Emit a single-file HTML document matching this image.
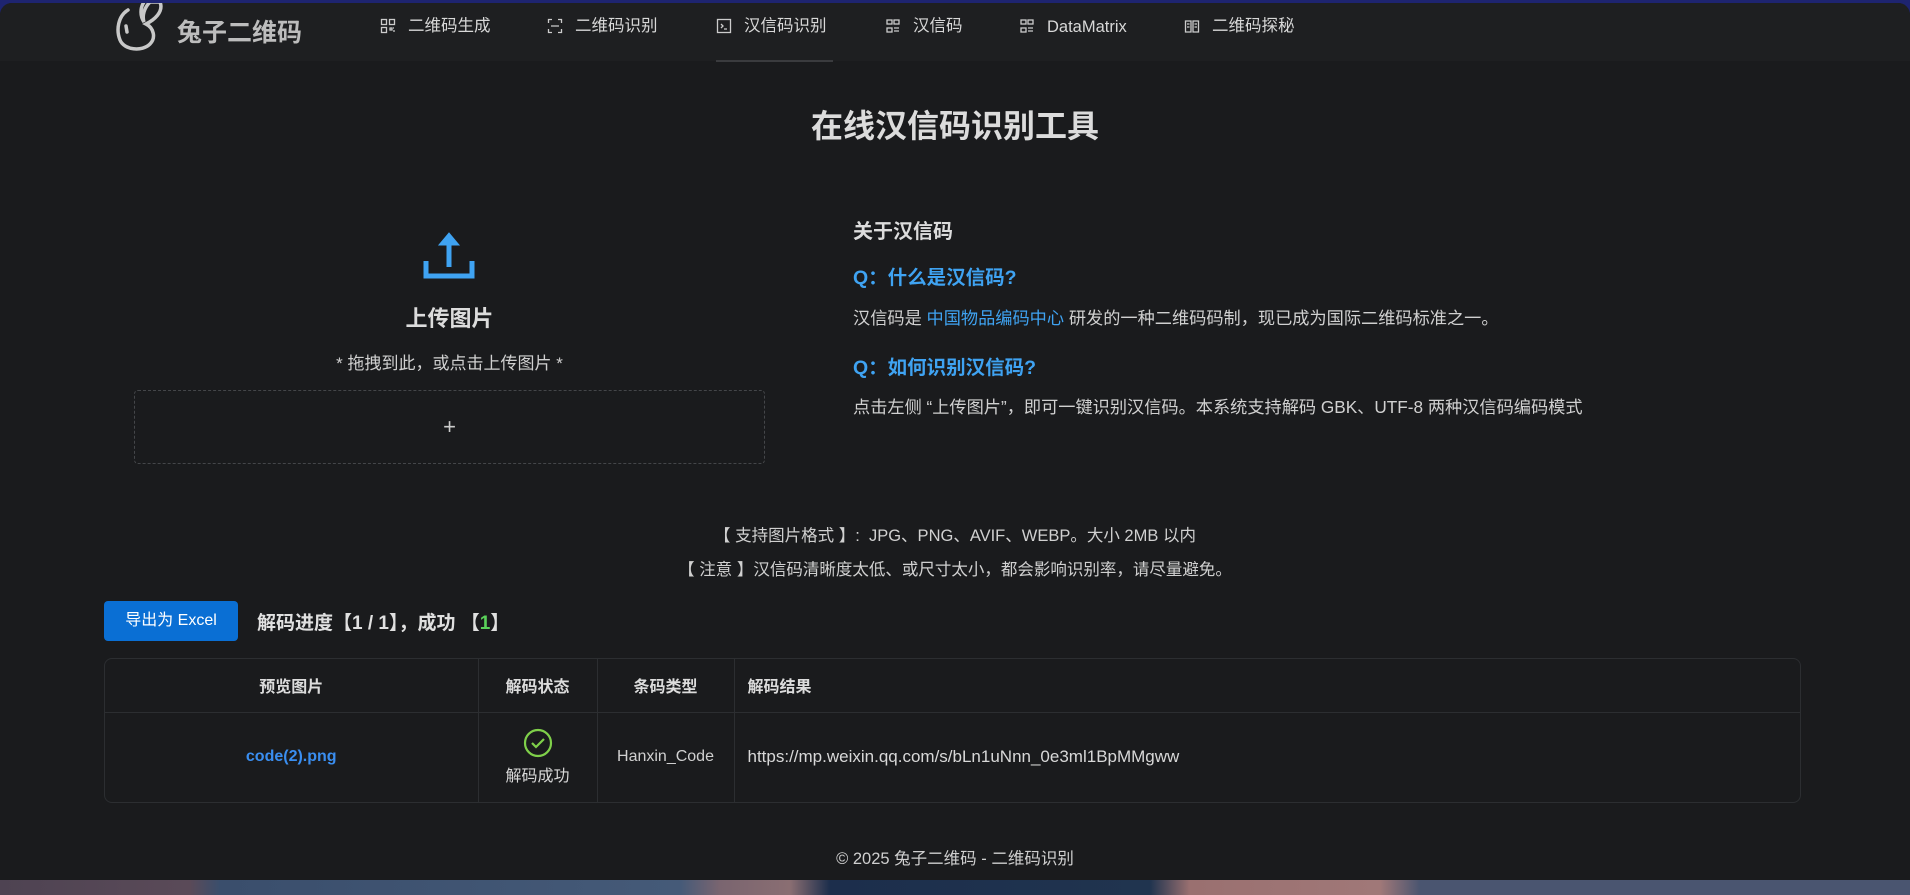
<!DOCTYPE html>
<html><head><meta charset="utf-8"><style>
*{margin:0;padding:0;box-sizing:border-box}
html,body{width:1910px;height:895px;overflow:hidden;background:#1e2470;font-family:"Liberation Sans","Noto Sans CJK SC",sans-serif;color:#d6d6d6}
#win{position:absolute;left:0;top:3px;width:1910px;height:877px;background:#1a1b1d;border-radius:12px 12px 0 0;overflow:hidden}
#nav{position:absolute;left:0;top:0;width:1910px;height:58px;background:#1e1f21}
.ni{position:absolute;top:11px;font-size:16.5px;color:#d8d8d8;display:flex;align-items:center;gap:12px;height:24px;line-height:24px}
.ni svg{width:16px;height:16px;flex:none}
#ul{position:absolute;left:716px;top:57px;width:117px;height:2px;background:#3a3b3e}
#strip{position:absolute;left:0;top:880px;width:1910px;height:15px;background:linear-gradient(90deg,#4e4352 0,#5a4a58 190px,#3a4e6c 220px,#455a78 680px,#7a6570 720px,#8a6e72 790px,#1c2e4c 830px,#20344f 1150px,#9a7070 1190px,#a07878 1380px,#4a5570 1420px,#4a5570 1910px)}
.c{position:absolute;left:0;width:1910px;text-align:center}
.blue{color:#3fa3f2}
th,td{border-right:1px solid #2c2e31}
</style></head><body>
<div id="win">
<div id="nav">
 <svg style="position:absolute;left:110px;top:-3px" width="56" height="56" viewBox="0 0 56 56" fill="none" stroke="#c8c8c8" stroke-width="3.5" stroke-linecap="round"><path d="M18 10 C8 16 6 30 10 40 C14 50 32 52 40 44 C46 38 44 28 36 24 C44 20 54 12 50 2 L40 2 C34 8 32 16 34 22 C30 16 30 8 34 2"/><path d="M16 26 L17 32"/></svg>
 <div style="position:absolute;left:177px;top:10px;font-size:25px;font-weight:bold;color:#bdbdbd">兔子二维码</div>
 <div class="ni" style="left:380px"><svg viewBox="0 0 16 16" fill="none" stroke="#ccc" stroke-width="1.3"><rect x="1.5" y="1.5" width="5" height="5"/><rect x="9.5" y="1.5" width="5" height="5"/><rect x="1.5" y="9.5" width="5" height="5"/><path d="M10 10h2v2h-2zM13 13h2M13 10h1"/></svg>二维码生成</div>
 <div class="ni" style="left:547px"><svg viewBox="0 0 16 16" fill="none" stroke="#ccc" stroke-width="1.3"><path d="M1.5 5V1.5H5M11 1.5h3.5V5M14.5 11v3.5H11M5 14.5H1.5V11M4 8h8"/></svg>二维码识别</div>
 <div class="ni" style="left:716px"><svg viewBox="0 0 16 16" fill="none" stroke="#ccc" stroke-width="1.3"><rect x="1.5" y="1.5" width="13" height="13"/><path d="M5 6l2 2-2 2M8 11h3"/></svg>汉信码识别</div>
 <div class="ni" style="left:885px"><svg viewBox="0 0 16 16" fill="none" stroke="#ccc" stroke-width="1.3"><rect x="2" y="2" width="5" height="4"/><rect x="9" y="2" width="5" height="4"/><rect x="2" y="10" width="5" height="4"/><path d="M9 10h5M9 13h5"/></svg>汉信码</div>
 <div class="ni" style="left:1019px"><svg viewBox="0 0 16 16" fill="none" stroke="#ccc" stroke-width="1.3"><rect x="2" y="2" width="5" height="4"/><rect x="9" y="2" width="5" height="4"/><rect x="2" y="10" width="5" height="4"/><path d="M9 10h5M9 13h5"/></svg><span style="position:relative;top:1px">DataMatrix</span></div>
 <div class="ni" style="left:1184px"><svg viewBox="0 0 16 16" fill="none" stroke="#ccc" stroke-width="1.3"><path d="M1.5 3h5.5v11H1.5zM9 3h5.5v11H9zM3 6h2.5M3 9h2.5M10.5 6h2.5M10.5 9h2.5"/></svg>二维码探秘</div>
 <div id="ul"></div>
</div>
<div class="c" style="top:98px;font-size:32px;font-weight:bold;color:#dcdcdc">在线汉信码识别工具</div>
<svg style="position:absolute;left:422px;top:226px" width="54" height="52" viewBox="0 0 54 52" fill="none" stroke="#3fa3f2" stroke-width="5"><path d="M4 32v15h46V32"/><path d="M27 38V8"/><path d="M17 16L27 4l10 12z" fill="#3fa3f2" stroke-width="1"/></svg>
<div style="position:absolute;left:134px;width:631px;top:298px;text-align:center;font-size:22px;font-weight:bold;color:#dcdcdc">上传图片</div>
<div style="position:absolute;left:134px;width:631px;top:346px;text-align:center;font-size:17px;color:#d0d0d0">* 拖拽到此，或点击上传图片 *</div>
<div style="position:absolute;left:134px;top:387px;width:631px;height:74px;border:1px dashed #444649;border-radius:4px;text-align:center;line-height:72px;font-size:22px;color:#ccc">+</div>
<div style="position:absolute;left:853px;top:212px;font-size:20px;font-weight:bold;color:#dcdcdc">关于汉信码</div>
<div class="blue" style="position:absolute;left:853px;top:258px;font-size:19.5px;font-weight:bold">Q：什么是汉信码?</div>
<div style="position:absolute;left:853px;top:301px;font-size:17.2px;color:#d0d0d0">汉信码是 <span class="blue">中国物品编码中心</span> 研发的一种二维码码制，现已成为国际二维码标准之一。</div>
<div class="blue" style="position:absolute;left:853px;top:348px;font-size:19.5px;font-weight:bold">Q：如何识别汉信码?</div>
<div style="position:absolute;left:853px;top:390px;font-size:17.2px;color:#d0d0d0">点击左侧 “上传图片”，即可一键识别汉信码。本系统支持解码 GBK、UTF-8 两种汉信码编码模式</div>
<div class="c" style="top:519px;font-size:16.5px;color:#d0d0d0">【 支持图片格式 】:&nbsp; JPG、PNG、AVIF、WEBP。大小 2MB 以内</div>
<div class="c" style="top:553px;font-size:16.5px;color:#d0d0d0">【 注意 】汉信码清晰度太低、或尺寸太小，都会影响识别率，请尽量避免。</div>
<div style="position:absolute;left:104px;top:598px;width:134px;height:40px;background:#0a6fd4;border-radius:4px;color:#fff;font-size:16px;text-align:center;line-height:40px">导出为 Excel</div>
<div style="position:absolute;left:257px;top:605px;font-size:19px;font-weight:bold;color:#e0e0e0">解码进度【1 / 1】，成功 【<span style="color:#5ad25a">1</span>】</div>
<div style="position:absolute;left:104px;top:655px;width:1697px;height:145px;border:1px solid #2c2e31;border-radius:8px;overflow:hidden">
<table style="border-collapse:collapse;width:100%;font-size:16px">
<tr style="height:53px;border-bottom:1px solid #2c2e31;font-weight:bold;color:#dcdcdc"><th style="width:373px">预览图片</th><th style="width:119px">解码状态</th><th style="width:137px">条码类型</th><th style="text-align:left;padding-left:13px;border:none">解码结果</th></tr>
<tr style="height:90px"><td style="text-align:center;color:#3a8ef0;font-weight:bold">code(2).png</td><td style="text-align:center;color:#d8d8d8"><svg width="30" height="30" viewBox="0 0 30 30" fill="none" stroke="#7fd04a" stroke-width="2.2" style="display:block;margin:0 auto 4px"><circle cx="15" cy="15" r="13"/><path d="M9 15l4 4 8-8"/></svg>解码成功</td><td style="text-align:center;color:#d0d0d0">Hanxin_Code</td><td style="padding-left:13px;color:#d8d8d8;border:none;font-size:17px">https://mp.weixin.qq.com/s/bLn1uNnn_0e3ml1BpMMgww</td></tr>
</table></div>
<div class="c" style="top:842px;font-size:16.5px;color:#cfcfcf">© 2025 兔子二维码 - 二维码识别</div>
</div>
<div id="strip"></div>
</body></html>
